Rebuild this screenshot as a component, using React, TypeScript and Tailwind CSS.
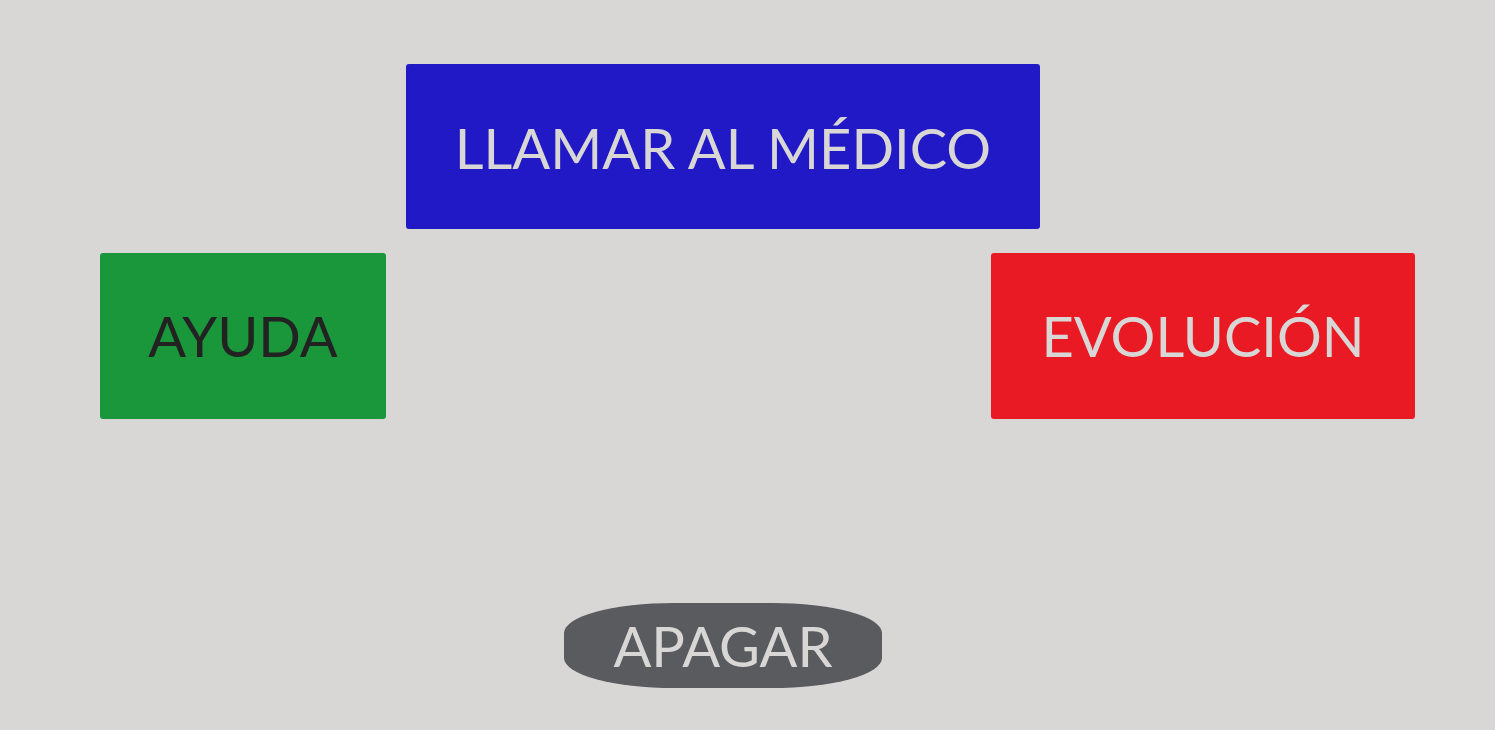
export default function App() {
  return (
    <div
      className="w-[1495px] h-[730px] bg-[#d8d7d5] flex flex-col pt-[64px]"
      style={{ fontFamily: 'Lato, "Noto Sans", sans-serif' }}
    >
      {/* Top button */}
      <div className="flex pl-[406px]">
        <button className="w-[634px] h-[165px] bg-[#2019c5] rounded-[3px] flex items-center justify-center pt-[2px] text-[56px] leading-none text-[#d8d7d5]">
          LLAMAR AL MÉDICO
        </button>
      </div>

      {/* Middle row */}
      <div className="flex mt-[24px] pl-[100px]">
        <button className="w-[286px] h-[166px] bg-[#1a963b] rounded-[3px] flex items-center justify-center text-[56px] leading-none text-[#222222]">
          AYUDA
        </button>
        <button className="ml-[605px] w-[424px] h-[166px] bg-[#e91a23] rounded-[3px] flex items-center justify-center text-[56px] leading-none text-[#d8d7d5]">
          EVOLUCIÓN
        </button>
      </div>

      {/* Power off */}
      <div className="flex mt-[184px] pl-[564px]">
        <button className="w-[318px] h-[85px] bg-[#5a5b5f] rounded-[110px/30px] flex items-center justify-center text-[56px] leading-none text-[#d8d7d5]">
          APAGAR
        </button>
      </div>
    </div>
  );
}
